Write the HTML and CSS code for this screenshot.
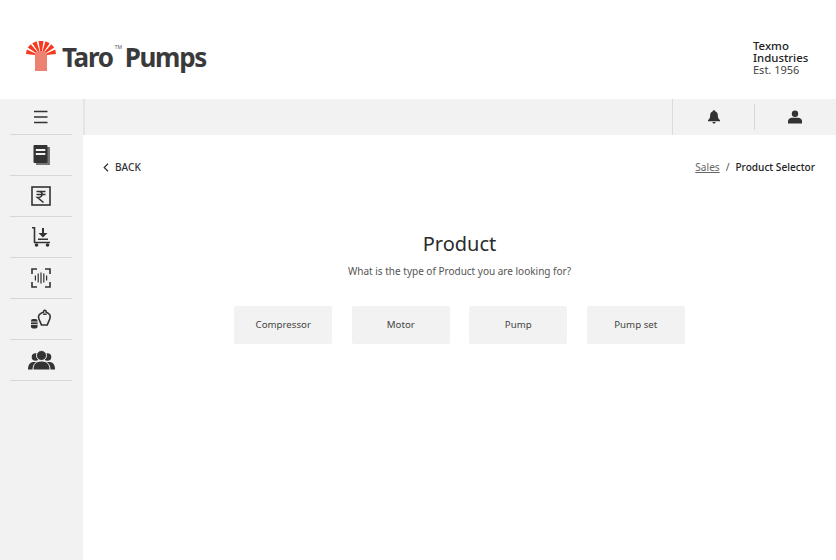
FILE: index.html
```html
<!DOCTYPE html>
<html lang="en">
<head>
  <meta charset="UTF-8">
  <meta name="viewport" content="width=device-width, initial-scale=1.0">
  <title>Taro Pumps - Product Selector</title>
  <link rel="stylesheet" href="styles.css">
</head>
<body>
  <header class="site-header">
    <div class="logo">
      <svg class="logo-mark" width="30" height="30" viewBox="0 0 30 30">
        <path class="logo-stem" d="M9 13l3-3h6l3 3v17H9z"/>
        <path class="logo-rays" d="M12.500 0h5l-1.500 10h-2zM19.500 .3l4.200 1.900-5.600 8.300-1.500-.8zM10.500 .3L6.300 2.200l5.600 8.300 1.500-.8zM25.300 3.200l3 3.400-8.300 5.400-1.200-1.200zM4.700 3.200l-3 3.400 8.300 5.400 1.200-1.200zM29.300 8.600l.7 4.300-9 1.100-.5-1.600zM.7 8.600L0 12.900 9 14l.5-1.600z"/>
      </svg>
      <span class="logo-name">Taro</span><span class="logo-tm">TM</span><span class="logo-name">Pumps</span>
    </div>
    <div class="company">
      <strong>Texmo<br>Industries</strong><br>Est. 1956
    </div>
  </header>

  <div class="layout">
    <nav class="sidebar">
      <a class="side-item side-menu" href="#">
        <svg width="16" height="14" viewBox="0 0 16 14"><path class="line" d="M1 1.500h13.500M1 7h13.500M1 12.500h13.500"/></svg>
      </a>
      <a class="side-item" href="#">
        <svg width="17" height="20" viewBox="0 0 17 20">
          <path class="fill-soft" d="M3 2h14v18H3z"/>
          <path class="fill" d="M1.500 0h12a1 1 0 0 1 1 1v16a1 1 0 0 1-1 1h-12a1 1 0 0 1-1-1V1a1 1 0 0 1 1-1z"/>
          <path class="line-light" d="M2.800 5h9.500M2.800 9h9.500"/>
        </svg>
      </a>
      <a class="side-item" href="#">
        <svg width="20" height="20" viewBox="0 0 20 20">
          <rect class="line" x="1" y="1" width="18" height="18"/>
          <path class="line" d="M5.500 5.500h9M5.500 8.500h9M8 5.500c4.500 0 4.500 6-1.500 6l6 5"/>
        </svg>
      </a>
      <a class="side-item" href="#">
        <svg width="18" height="20" viewBox="0 0 18 20">
          <path class="line" d="M0 .8h2.500v14.700H18"/>
          <path class="fill" d="M10 1h2v5h3.500l-4.500 4.500L6.500 6H10zM6 11.500h10v1.500H6z"/>
          <circle class="fill" cx="4.500" cy="18" r="1.800"/>
          <circle class="fill" cx="15.500" cy="18" r="1.800"/>
        </svg>
      </a>
      <a class="side-item" href="#">
        <svg width="20" height="20" viewBox="0 0 20 20">
          <path class="line" d="M1 6V1h5M14 1h5v5M1 14v5h5M19 14v5h-5"/>
          <path class="line-thin" d="M4.400 7.500v5M7.200 5.500v9M10 4.500v11M12.800 5.500v9M15.600 7.500v5"/>
        </svg>
      </a>
      <a class="side-item" href="#">
        <svg width="20" height="20" viewBox="0 0 20 20">
          <path class="line" d="M12.500 3.200c-.2-2.700 2.900-2.700 2.700 0 2.200.8 4 2.200 4 4.500 0 3-2 5-3 8.300H10.500c-1-3.300-3-5.300-3-8.300 0-2.300 2.700-3.700 5-4.500zM12.200 5.300h3.300"/>
          <rect class="fill" x="0" y="10" width="6.500" height="9.500" rx="1.800"/>
          <path class="line-light-thin" d="M0 13h6.500M0 15.500h6.500"/>
        </svg>
      </a>
      <a class="side-item" href="#">
        <svg width="27" height="20" viewBox="0 0 27 20">
          <circle class="fill" cx="7.500" cy="7" r="3.800"/>
          <circle class="fill" cx="19.500" cy="7" r="3.800"/>
          <path class="fill" d="M0 19.500c0-5 2-7.500 6-7.500h15c4 0 6 2.500 6 7.500z"/>
          <circle class="fill-edge" cx="13.500" cy="5.500" r="5"/>
          <path class="fill-edge" d="M5 20c0-6 3-9 8.500-9s8.500 3 8.500 9z"/>
        </svg>
      </a>
    </nav>

    <div class="content">
      <div class="topbar">
        <div class="topbar-btn">
          <svg width="12" height="14" viewBox="0 0 13 15"><path class="fill" d="M5.200 1.200c0-1.500 2.600-1.500 2.600 0 2.200.7 2.900 2.500 2.900 5 0 2.200.8 3.500 2.300 4.800v1H0v-1c1.500-1.300 2.300-2.600 2.300-4.800 0-2.500.7-4.300 2.900-5zM4.800 13h3.400c-.2 2.200-3.200 2.200-3.400 0z"/></svg>
        </div>
        <div class="topbar-btn">
          <svg width="14" height="14" viewBox="0 0 14 13"><circle class="fill" cx="7" cy="3.200" r="3.200"/><path class="fill" d="M0 13v-2.500c0-2 2-3.300 4-3.300h6c2 0 4 1.300 4 3.300V13z"/></svg>
        </div>
      </div>

      <main class="main">
        <div class="crumbs">
          <a class="back" href="#">
            <svg width="6" height="9" viewBox="0 0 6 9"><path class="line-thin" d="M5 .8L1.200 4.500 5 8.200"/></svg>
            BACK
          </a>
          <div class="path"><a href="#">Sales</a><span class="sep">/</span><strong>Product Selector</strong></div>
        </div>

        <h1>Product</h1>
        <p class="question">What is the type of Product you are looking for?</p>

        <div class="options">
          <button>Compressor</button>
          <button>Motor</button>
          <button>Pump</button>
          <button>Pump set</button>
        </div>
      </main>
    </div>
  </div>
</body>
</html>
```

FILE: styles.css
```css
body {
  font-family: "Noto Sans", Arial, sans-serif;
  margin: 0;
  padding: 0;
  height: 560px;
  overflow: hidden;
  background-color: white;
  color: #333;
}
a {
  color: inherit;
  text-decoration: none;
}
.site-header {
  height: 99px;
  display: flex;
  justify-content: space-between;
  align-items: center;
}
.logo {
  display: flex;
  align-items: center;
  margin-left: 26px;
  margin-top: 14px;
  height: 32px;
}
.logo-mark {
  margin-right: 6px;
  margin-bottom: 2px;
}
.logo-stem {
  fill: #ee8272;
}
.logo-rays {
  fill: #f63a1f;
}
.logo-name {
  font-size: 26px;
  font-weight: 700;
  letter-spacing: -1.300px;
  color: #3a3a3c;
  line-height: 32px;
}
.logo-tm {
  font-size: 5px;
  line-height: 8px;
  align-self: flex-start;
  width: 12px;
  padding-left: 2px;
  box-sizing: border-box;
  margin-top: 2px;
  color: #555;
}
.company {
  font-size: 11px;
  line-height: 12px;
  width: 83px;
  margin-top: 16px;
  color: #444;
}
.company strong {
  color: #222;
  font-weight: 500;
  font-size: 11.400px;
}
.layout {
  display: flex;
  height: 461px;
}
.sidebar {
  width: 83px;
  flex-shrink: 0;
  background-color: #f2f2f2;
  box-sizing: border-box;
  padding: 0 11px 0 10px;
}
.side-item {
  display: flex;
  align-items: center;
  justify-content: center;
  height: 40px;
  border-bottom: 1px solid #d6d6d6;
}
.side-menu {
  height: 35px;
}
.content {
  flex: 1;
}
.topbar {
  height: 36px;
  background-color: #f2f2f2;
  border-left: 2px solid #e4e4e4;
  display: flex;
  justify-content: flex-end;
}
.topbar-btn {
  width: 82px;
  box-sizing: border-box;
  display: flex;
  align-items: center;
  justify-content: center;
  position: relative;
  border-left: 1px solid #dcdcdc;
}
.topbar-btn + .topbar-btn {
  border-left: none;
}
.topbar-btn + .topbar-btn::before {
  content: "";
  position: absolute;
  left: 0;
  top: 5px;
  bottom: 5px;
  width: 1px;
  background-color: #d6d6d6;
}
.main {
  padding: 24px 21px 0 20px;
  text-align: center;
}
.crumbs {
  display: flex;
  justify-content: space-between;
  align-items: center;
  font-size: 10.100px;
  line-height: 16px;
}
.back {
  display: flex;
  align-items: center;
  gap: 6px;
  font-weight: 500;
  color: #333;
}
.path a {
  text-decoration: underline;
  color: #666;
}
.path .sep {
  margin: 0 6px;
  color: #555;
}
.path strong {
  font-weight: 500;
  color: #222;
}
h1 {
  font-size: 20px;
  font-weight: 400;
  line-height: 28px;
  margin: 55px 0 0 0;
  padding-left: 1px;
  color: #2b2b2b;
}
.question {
  font-size: 10px;
  line-height: 16px;
  margin: 5px 0 0 0;
  padding-left: 1px;
  color: #555;
}
.options {
  display: flex;
  justify-content: center;
  gap: 19.500px;
  margin-top: 27px;
  padding-left: 1px;
}
button {
  width: 98px;
  height: 38px;
  background-color: #f2f2f2;
  border: none;
  border-radius: 2px;
  font-family: inherit;
  font-size: 9.700px;
  color: #444;
  padding: 0 0 2px 0;
  cursor: pointer;
}
.line {
  fill: none;
  stroke: #333;
  stroke-width: 1.600;
}
.line-thin {
  fill: none;
  stroke: #333;
  stroke-width: 1.200;
}
.line-light {
  fill: none;
  stroke: #f2f2f2;
  stroke-width: 1.800;
}
.line-light-thin {
  fill: none;
  stroke: #f2f2f2;
  stroke-width: 0.800;
}
.fill {
  fill: #333;
}
.fill-soft {
  fill: #777;
}
.fill-edge {
  fill: #333;
  stroke: #f2f2f2;
  stroke-width: 1;
}
```
